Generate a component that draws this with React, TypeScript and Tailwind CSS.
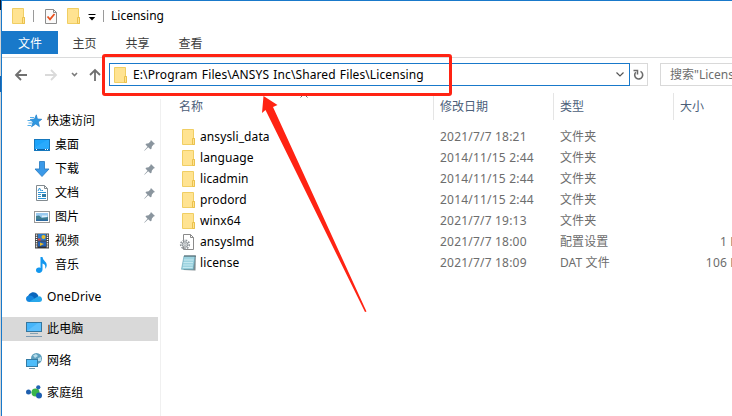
import type { ReactNode } from "react";

function FolderIcon() {
  return (
    <svg width="16" height="18" viewBox="0 0 16 18" className="shrink-0">
      <path d="M1.5 1.5H12.5V10.5H13.5V16.5H1.5Z" fill="#ffe391" stroke="#f0ce63" />
      <path d="M11.5 16.5V10.5H13.5V16.5Z" fill="#ffe391" stroke="#eac14d" />
    </svg>
  );
}

function CheckDocIcon() {
  return (
    <svg width="14" height="17" viewBox="0 0 14 17" className="shrink-0">
      <path d="M1.5 1.5H9.5L12.5 4.5V15.5H1.5Z" fill="#fafafa" stroke="#8c8c8c" />
      <path d="M9.5 1.5V4.5H12.5" fill="none" stroke="#8c8c8c" />
      <path d="M3.5 8.5L6 11.3L10.5 6" fill="none" stroke="#e8501e" strokeWidth="1.8" />
    </svg>
  );
}

function StarIcon() {
  return (
    <svg width="16" height="16" viewBox="0 0 16 16">
      <path d="M9.3 1.8L10.4 6L14.8 6.3L11.3 8.9L12.4 13.6L8.7 11L4.5 13.8L6 9.3L3.2 6.5L7.5 6Z" fill="#2f97e0" stroke="#1f80cd" strokeWidth="0.7" />
      <path d="M3 4.5H7M0.5 7.5H4M1.5 10H5M0.5 12.5H4" stroke="#55aee8" strokeWidth="1" />
    </svg>
  );
}

function DesktopIcon() {
  return (
    <svg width="16" height="16" viewBox="0 0 16 16">
      <rect x="0.5" y="2.5" width="15" height="11" fill="#1ca4fb" stroke="#1678bd" />
      <path d="M1 10L13 3H15V12H1Z" fill="#35b0ff" opacity="0.5" />
      <path d="M1 12.5H15" stroke="#0b62a8" />
      <path d="M2 12.5H3M11 12.5H12M13 12.5H14" stroke="#fff" />
    </svg>
  );
}

function DownloadIcon() {
  return (
    <svg width="16" height="16" viewBox="0 0 16 16">
      <path d="M5.5 0.5H10.5V8H15L8 15.5L1 8H5.5Z" fill="#3a99e8" stroke="#2f80c4" strokeWidth="0.9" />
    </svg>
  );
}

function DocumentIcon() {
  return (
    <svg width="16" height="16" viewBox="0 0 16 16">
      <path d="M2.5 0.5H10.5L13.5 3.5V15.5H2.5Z" fill="#fff" stroke="#838b90" />
      <path d="M10.5 0.5V3.5H13.5" fill="none" stroke="#838b90" />
      <path d="M4 6L5.5 3L7 6M7.5 5.5H9M4 7.5H12M4 9.5H7M4 11.5H7M4 13.5H12" fill="none" stroke="#2d95d8" />
      <rect x="8" y="9" width="4" height="3" fill="#2f7ba5" />
    </svg>
  );
}

function PictureIcon() {
  return (
    <svg width="16" height="16" viewBox="0 0 16 16">
      <rect x="0.5" y="2.5" width="15" height="11" fill="#fff" stroke="#999" />
      <rect x="2" y="4" width="12" height="8" fill="#9bcbf0" />
      <path d="M2 7L5 6.5L8 9L14 8V12H2Z" fill="#417f91" />
      <path d="M2 10.5H14V12H2Z" fill="#2d6aa0" />
      <path d="M8 6.5H13V8H8Z" fill="#e1f1fb" />
    </svg>
  );
}

function VideoIcon() {
  return (
    <svg width="16" height="16" viewBox="0 0 16 16">
      <rect x="1" y="0.5" width="14" height="15" fill="#474747" />
      <path d="M2.5 1.5V15M13.5 1.5V15" stroke="#fff" strokeWidth="1.4" strokeDasharray="1.2 1" />
      <rect x="4" y="1" width="8" height="6.5" fill="#2c79cb" />
      <rect x="4" y="8.5" width="8" height="6.5" fill="#2461b5" />
      <circle cx="9.5" cy="4" r="2" fill="#e8bd2c" />
      <path d="M4 5.5H7V7.5H4Z" fill="#d4413b" />
      <path d="M6 9.5L10 11L6 13Z" fill="#e8bd2c" />
      <path d="M4 13.5H12V15H4Z" fill="#303030" />
    </svg>
  );
}

function MusicIcon() {
  return (
    <svg width="16" height="16" viewBox="0 0 16 16">
      <path d="M6.5 0H8.5C9 4 13 4.5 12.7 8.5C12.6 10 12 11 11 11.8C12 8.5 10.5 7 8.5 6.5V12.5C8.5 17 2 17 2 13.2C2 10.8 4.5 10 6.5 11Z" fill="#1297ef" />
    </svg>
  );
}

function OneDriveIcon() {
  return (
    <svg width="16" height="16" viewBox="0 0 16 16">
      <path d="M2 8C2 4 9 0 12.5 7L10 11H3Z" fill="#0966bd" />
      <path d="M0 9.7C0 6.5 4.5 5.5 7 7.7L11 13H3.5C1.5 13 0 11.7 0 9.7Z" fill="#1486de" />
      <path d="M3 13L11 8C14 6 16.3 8.5 16 10.7C15.8 12 14.7 13 13.3 13Z" fill="#28a7ea" />
    </svg>
  );
}

function ComputerIcon() {
  return (
    <svg width="16" height="16" viewBox="0 0 16 16">
      <rect x="0.5" y="1.5" width="15" height="9" fill="#45b5fb" stroke="#35779f" />
      <path d="M1 10L12 2H15V10Z" fill="#6cc7ff" opacity="0.6" />
      <path d="M4 12.5H12" stroke="#85a3b5" />
      <path d="M0 15.5H16" stroke="#7b9bb3" />
    </svg>
  );
}

function NetworkIcon() {
  return (
    <svg width="16" height="16" viewBox="0 0 16 16">
      <circle cx="10.5" cy="5.5" r="5.5" fill="#5e9fbd" />
      <path d="M7 2.5L10 1L12 3L9 5ZM12 5L15 4V8L12 8Z" fill="#b6dcea" />
      <rect x="0.5" y="6.5" width="11" height="7" fill="#4ebdfa" stroke="#347ba4" />
      <path d="M3 15.5H9" stroke="#7295a9" />
    </svg>
  );
}

function HomegroupIcon() {
  return (
    <svg width="16" height="16" viewBox="0 0 16 16">
      <path d="M2.5 7L9 7.5L12.5 2.5" stroke="#9ac4df" fill="none" />
      <circle cx="9.5" cy="7.5" r="4" fill="#39b54a" />
      <circle cx="2.5" cy="7" r="2.5" fill="#1f5fae" />
      <circle cx="12.3" cy="2.3" r="2.1" fill="#2264b3" />
      <circle cx="13" cy="10.5" r="3" fill="#1c5eb0" />
    </svg>
  );
}

function PinIcon() {
  return (
    <svg width="11" height="11" viewBox="0 0 10 10">
      <path d="M6.3 0L10 3.7L8.7 4.2L7.2 5.8L6.7 8.2L5.8 8.5L3.8 6.6L0.5 9.8L0.2 9.5L3.2 6.1L1.4 4.2L1.8 3.3L4.2 2.9L5.8 1.3Z" fill="#8a959e" />
    </svg>
  );
}

function ConfigIcon() {
  return (
    <svg width="16" height="18" viewBox="1 0 16 18" className="shrink-0 overflow-visible">
      <path d="M3.5 1.5H10.5L13.5 4.5V16.5H3.5Z" fill="#fff" stroke="#8a8a8a" />
      <path d="M10.5 1.5V4.5H13.5" fill="none" stroke="#8a8a8a" />
      <circle cx="5" cy="11.5" r="4.3" fill="none" stroke="#8f959a" strokeWidth="1.6" strokeDasharray="1.7 1.2" />
      <circle cx="5" cy="11.5" r="2.8" fill="#d5d8da" stroke="#8f959a" />
      <circle cx="5" cy="11.5" r="1" fill="#fff" stroke="#8f959a" strokeWidth="0.6" />
    </svg>
  );
}

function NotepadIcon() {
  return (
    <svg width="16" height="18" viewBox="0.5 0 16 18" className="shrink-0">
      <path d="M4 2H15.3L15 16.5L3 16Z" fill="#7d8a8f" />
      <path d="M3.5 2H14.5L12.8 15.3H1Z" fill="#9dd3e0" stroke="#5f9fb3" strokeWidth="0.6" />
      <path d="M3.5 6H13M3 8.5H12.5M2.7 11H12.2M2.3 13.5H12" stroke="#c4e8f0" />
      <path d="M4 2H15" stroke="#4d5c62" strokeWidth="2" strokeDasharray="1 1" />
    </svg>
  );
}

const PINNED = [
  { label: "桌面", icon: <DesktopIcon />, pin: true },
  { label: "下载", icon: <DownloadIcon />, pin: true },
  { label: "文档", icon: <DocumentIcon />, pin: true },
  { label: "图片", icon: <PictureIcon />, pin: true },
  { label: "视频", icon: <VideoIcon />, pin: false },
  { label: "音乐", icon: <MusicIcon />, pin: false },
];

const FILES = [
  { name: "ansysli_data", date: "2021/7/7 18:21", type: "文件夹", size: "", kind: "folder" },
  { name: "language", date: "2014/11/15 2:44", type: "文件夹", size: "", kind: "folder" },
  { name: "licadmin", date: "2014/11/15 2:44", type: "文件夹", size: "", kind: "folder" },
  { name: "prodord", date: "2014/11/15 2:44", type: "文件夹", size: "", kind: "folder" },
  { name: "winx64", date: "2021/7/7 19:13", type: "文件夹", size: "", kind: "folder" },
  { name: "ansyslmd", date: "2021/7/7 18:00", type: "配置设置", size: "1 KB", kind: "config" },
  { name: "license", date: "2021/7/7 18:09", type: "DAT 文件", size: "106 KB", kind: "dat" },
];

function TreeRoot({ label, icon, active }: { label: string; icon: ReactNode; active?: boolean }) {
  return (
    <div className={`flex h-6 w-[156px] items-center gap-[5px] pl-6 ${active ? "bg-[#d9d9d9]" : ""}`}>
      {icon}
      <span className="tracking-[0.15px]">{label}</span>
    </div>
  );
}

function FileIcon({ kind }: { kind: string }) {
  if (kind === "config") return <ConfigIcon />;
  if (kind === "dat") return <NotepadIcon />;
  return <FolderIcon />;
}

export default function App() {
  return (
    <div className="relative flex h-[416px] w-[732px] overflow-hidden bg-white font-['Noto_Sans','Noto_Sans_CJK_SC',sans-serif] text-[12px] leading-4 whitespace-nowrap text-black">
      {/* window behind, only its edge shows */}
      <div className="flex w-px shrink-0 flex-col bg-[#d4d4d4]">
        <div className="h-[10px] bg-[#0b1b33]" />
        <div className="mt-[66px] h-4 bg-[#1663ad]" />
      </div>
      <div className="flex min-w-0 flex-1 flex-col border-t border-l border-[#1979ca]">
        <div className="flex h-[30px] shrink-0 items-center pl-[9px]">
          <FolderIcon />
          <div className="ml-[6px] h-3 w-px bg-[#9a9a9a]" />
          <div className="ml-[10px]">
            <CheckDocIcon />
          </div>
          <div className="ml-2">
            <FolderIcon />
          </div>
          <svg width="8" height="7" viewBox="0 0 8 7" className="mt-[2px] ml-[6px]">
            <path d="M0.5 0.5H7.5" stroke="#000" />
            <path d="M0.8 3H7.2L4 6.5Z" fill="#000" />
          </svg>
          <div className="ml-[7px] h-3 w-px bg-[#9a9a9a]" />
          <span className="ml-[7px]">Licensing</span>
        </div>
        <div className="flex h-[23px] shrink-0 text-[#3c3c3c]">
          <div className="flex w-14 items-center justify-center bg-[#1979ca] pt-[2px] text-white">文件</div>
          <div className="flex w-[53px] items-center justify-center pt-[2px]">主页</div>
          <div className="flex w-[53px] items-center justify-center pt-[2px]">共享</div>
          <div className="flex w-[53px] items-center justify-center pt-[2px]">查看</div>
        </div>
        <div className="mt-[3px] flex h-[42px] shrink-0 items-start border-t border-[#dadbdc] pt-[5px] pl-3">
          <svg width="78" height="14" viewBox="0 0 78 14" fill="none" className="mt-[5px] shrink-0">
            <path d="M13 7H2M7 2L2 7L7 12" stroke="#707070" strokeWidth="1.8" />
            <path d="M31 7H42M37 2L42 7L37 12" stroke="#dadada" strokeWidth="1.8" />
            <path d="M58 5L60.5 7.5L63 5" stroke="#7b7b7b" strokeWidth="1.6" />
          </svg>
          <svg width="14" height="14" viewBox="0 0 14 14" fill="none" className="mt-[5px] -ml-1 shrink-0">
            <path d="M7 13V2M2 7L7 2L12 7" stroke="#707070" strokeWidth="1.8" />
          </svg>
          <div className="ml-[7px] flex h-[23px] w-[521px] shrink-0 items-center border border-[#1979ca] pl-[3px]">
            <FolderIcon />
            <span className="ml-1 tracking-[0.1px] [word-spacing:1px]">E:\Program Files\ANSYS Inc\Shared Files\Licensing</span>
            <svg width="10" height="7" viewBox="0 0 10 7" fill="none" className="mr-1 ml-auto">
              <path d="M1.5 1.5L5 5L8.5 1.5" stroke="#555" strokeWidth="1.2" />
            </svg>
          </div>
          <div className="flex h-[23px] w-[18px] shrink-0 items-center justify-center border border-l-0 border-[#d9d9d9]">
            <svg width="11" height="12" viewBox="0 0 11 12" fill="none">
              <path d="M2.8 3.2A4 4 0 1 0 7.5 2.4" stroke="#6b6b6b" strokeWidth="1.6" />
              <path d="M0.5 1.5H4.5V5.5" stroke="#6b6b6b" strokeWidth="1.5" />
            </svg>
          </div>
          <div className="ml-3 flex h-[23px] w-[200px] shrink-0 items-center border border-[#d9d9d9] pl-[9px] text-[#6d6d6d]">
            搜索"Licensing"
          </div>
        </div>
        <div className="flex min-h-0 flex-1">
          <nav className="w-[159px] shrink-0 border-r border-[#f0f0f0] pt-[10px]">
            <div className="flex h-6 items-center gap-[4px] pl-[25px]">
              <StarIcon />
              <span>快速访问</span>
            </div>
            {PINNED.map((item) => (
              <div key={item.label} className="flex h-6 items-center gap-[5px] pr-[5px] pl-8">
                {item.icon}
                <span className="flex-1">{item.label}</span>
                {item.pin && <PinIcon />}
              </div>
            ))}
            <div className="mt-2 flex flex-col gap-2">
              <TreeRoot label="OneDrive" icon={<OneDriveIcon />} />
              <TreeRoot label="此电脑" icon={<ComputerIcon />} active />
              <TreeRoot label="网络" icon={<NetworkIcon />} />
              <TreeRoot label="家庭组" icon={<HomegroupIcon />} />
            </div>
          </nav>
          <main className="min-w-0 flex-1">
            <div className="mt-[-6px] flex h-[27px] items-center text-[#4c607a]">
              <div className="flex h-full w-[272px] items-center pl-[18px]">
                <span>名称</span>
                {/* sort direction mark */}
                <svg width="8" height="5" viewBox="0 0 8 5" fill="none" className="ml-[97px] self-start">
                  <path d="M0.5 4.5L4 1L7.5 4.5" stroke="#6d6d6d" />
                </svg>
              </div>
              <div className="flex h-full w-[120px] items-center border-l border-[#e5e5e5] pl-[6px]">修改日期</div>
              <div className="flex h-full w-[120px] items-center border-l border-[#e5e5e5] pl-[6px]">类型</div>
              <div className="flex h-full flex-1 items-center border-l border-[#e5e5e5] pl-[6px]">大小</div>
            </div>
            <div className="mt-[6px] text-[#6d6d6d]">
              {FILES.map((file) => (
                <div key={file.name} className="flex h-[21px] items-center">
                  <div className="flex w-[279px] shrink-0 items-center gap-[3px] pl-5 text-black">
                    <FileIcon kind={file.kind} />
                    <span className="tracking-[0.1px]">{file.name}</span>
                  </div>
                  <div className="w-[120px] shrink-0 tracking-[0.2px]">{file.date}</div>
                  <div className="w-[120px] shrink-0 tracking-[0.1px]">{file.type}</div>
                  <div className="flex w-[66px] shrink-0 justify-end tracking-[0.2px]">{file.size}</div>
                </div>
              ))}
            </div>
          </main>
        </div>
      </div>
      {/* red callout over the address bar */}
      <div className="absolute top-[54px] left-[102px] h-[42px] w-[350px] rounded-[3px] border-[3px] border-[#ff2313]" />
      <svg width="110" height="222" viewBox="0 0 110 222" className="absolute top-[94px] left-[260px]">
        <path d="M3.5 2L17.5 11L13 13L106.5 217.5L105 218L5.5 16L2 19Z" fill="#ff2313" />
      </svg>
    </div>
  );
}
